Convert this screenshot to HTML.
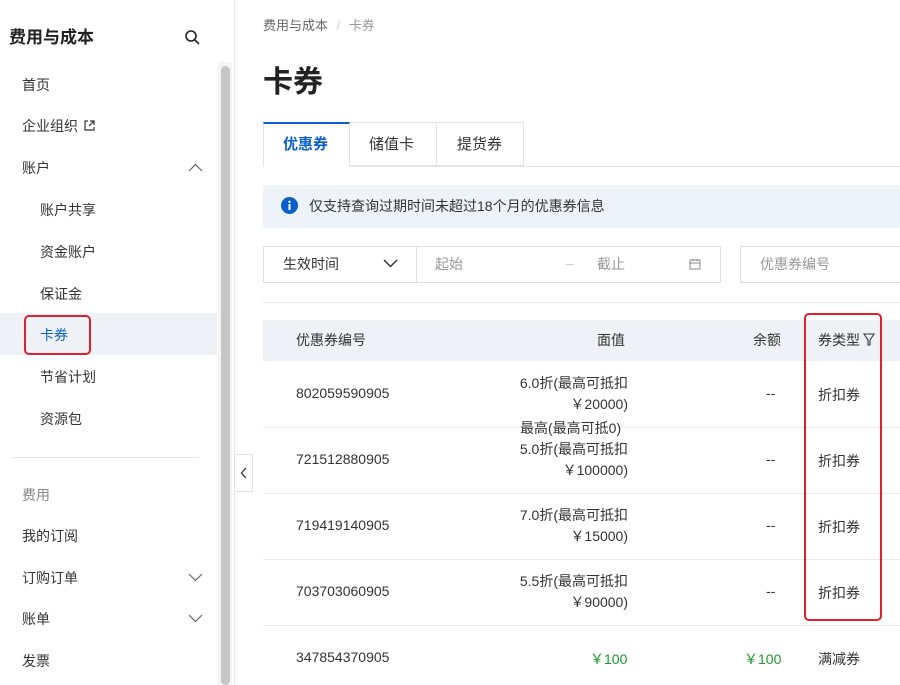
<!DOCTYPE html><html><head><meta charset="utf-8"><style>
*{box-sizing:border-box;margin:0;padding:0}
body{width:900px;height:685px;overflow:hidden;background:#fff;font-family:"Liberation Sans","Noto Sans CJK SC",sans-serif;color:#333;position:relative;font-size:14px}
.a{position:absolute;white-space:nowrap}
.nav{font-size:14px;color:#333}
.gray{color:#888}
.r{text-align:right}
</style></head><body>
<!-- sidebar -->
<div class="a" style="left:9px;top:23px;font-size:17px;font-weight:bold;color:#222">费用与成本</div>
<svg class="a" style="left:184px;top:29px" width="16" height="16" viewBox="0 0 16 16"><circle cx="7" cy="7" r="5" fill="none" stroke="#222" stroke-width="1.6"/><path d="M11 11l4 4" stroke="#222" stroke-width="1.6"/></svg>
<div class="a" style="left:0;top:313px;width:217px;height:42px;background:#eef2f7"></div>
<div class="a nav" style="left:22px;top:75px">首页</div>
<div class="a nav" style="left:22px;top:116px">企业组织</div>
<svg class="a" style="left:84px;top:120px" width="11" height="11" viewBox="0 0 11 11"><path d="M4 1H1v9h9V7M6 1h4v4M10 1L5 6" fill="none" stroke="#333" stroke-width="1.2"/></svg>
<div class="a nav" style="left:22px;top:158px">账户</div>
<svg class="a" style="left:188px;top:163px" width="15" height="9" viewBox="0 0 15 9"><path d="M1 8l6.5-6.5L14 8" fill="none" stroke="#666" stroke-width="1.2"/></svg>
<div class="a nav" style="left:40px;top:200px">账户共享</div>
<div class="a nav" style="left:40px;top:242px">资金账户</div>
<div class="a nav" style="left:40px;top:284px">保证金</div>
<div class="a nav" style="left:40px;top:325px;color:#0a5fc9">卡券</div>
<div class="a" style="left:24px;top:315px;width:67px;height:40px;border:2px solid #e0202a;border-radius:5px"></div>
<div class="a nav" style="left:40px;top:367px">节省计划</div>
<div class="a nav" style="left:40px;top:409px">资源包</div>
<div class="a" style="left:12px;top:457px;width:186px;height:1px;background:#e5e5e5"></div>
<div class="a nav gray" style="left:22px;top:485px">费用</div>
<div class="a nav" style="left:22px;top:526px">我的订阅</div>
<div class="a nav" style="left:22px;top:568px">订购订单</div>
<svg class="a" style="left:188px;top:573px" width="15" height="9" viewBox="0 0 15 9"><path d="M1 1l6.5 6.5L14 1" fill="none" stroke="#666" stroke-width="1.2"/></svg>
<div class="a nav" style="left:22px;top:609px">账单</div>
<svg class="a" style="left:188px;top:614px" width="15" height="9" viewBox="0 0 15 9"><path d="M1 1l6.5 6.5L14 1" fill="none" stroke="#666" stroke-width="1.2"/></svg>
<div class="a nav" style="left:22px;top:651px">发票</div>
<div class="a" style="left:218px;top:62px;width:14px;height:623px;background:#f4f4f4"></div>
<div class="a" style="left:221px;top:66px;width:9px;height:619px;background:#c6c6c6;border-radius:5px"></div>
<div class="a" style="left:234px;top:0;width:1px;height:685px;background:#e6e6e6"></div>
<div class="a" style="left:234px;top:454px;width:19px;height:38px;background:#fff;border:1px solid #e3e3e3"></div>
<svg class="a" style="left:240px;top:467px" width="8" height="12" viewBox="0 0 8 12"><path d="M6 1L1.5 6 6 11" fill="none" stroke="#333" stroke-width="1.3"/></svg>
<!-- main -->
<div class="a" style="left:263px;top:15px;font-size:13px;color:#666">费用与成本 <span style="color:#ccc;margin:0 5px">/</span> <span style="color:#999">卡券</span></div>
<div class="a" style="left:263px;top:57px;font-size:30px;font-weight:bold;color:#222">卡券</div>
<div class="a" style="left:263px;top:166px;width:637px;height:1px;background:#e3e3e3"></div>
<div class="a" style="left:263px;top:122px;width:87px;height:45px;background:#fff;border:1px solid #e3e3e3;border-top:2px solid #0a5fc9;border-bottom:none"></div>
<div class="a" style="left:350px;top:122px;width:87px;height:44px;border:1px solid #e3e3e3;border-left:none"></div>
<div class="a" style="left:437px;top:122px;width:87px;height:44px;border:1px solid #e3e3e3;border-left:none"></div>
<div class="a" style="left:283px;top:133px;font-size:15px;color:#0a5fc9;font-weight:bold">优惠券</div>
<div class="a" style="left:369px;top:133px;font-size:15px">储值卡</div>
<div class="a" style="left:457px;top:133px;font-size:15px">提货券</div>
<div class="a" style="left:263px;top:185px;width:637px;height:43px;background:#eef3f9"></div>
<svg class="a" style="left:281px;top:197px" width="17" height="17" viewBox="0 0 17 17"><circle cx="8.5" cy="8.5" r="8.5" fill="#0a5fc9"/><rect x="7.5" y="7" width="2" height="6" fill="#fff"/><circle cx="8.5" cy="4.8" r="1.2" fill="#fff"/></svg>
<div class="a" style="left:309px;top:196px;font-size:14px;color:#333">仅支持查询过期时间未超过18个月的优惠券信息</div>
<div class="a" style="left:263px;top:246px;width:458px;height:37px;border:1px solid #e0e0e0"></div>
<div class="a" style="left:416px;top:246px;width:1px;height:37px;background:#e0e0e0"></div>
<div class="a" style="left:283px;top:254px;font-size:14px">生效时间</div>
<svg class="a" style="left:383px;top:259px" width="15" height="9" viewBox="0 0 15 9"><path d="M1 1l6.5 6.5L14 1" fill="none" stroke="#333" stroke-width="1.5"/></svg>
<div class="a gray" style="left:435px;top:254px;font-size:14px;color:#999">起始</div>
<div class="a" style="left:566px;top:264px;width:8px;height:1px;background:#ccc"></div>
<div class="a" style="left:597px;top:254px;font-size:14px;color:#999">截止</div>
<svg class="a" style="left:689px;top:258px" width="12" height="12" viewBox="0 0 12 12"><rect x="1" y="2" width="10" height="9" fill="none" stroke="#888"/><path d="M1 5h10M4 1v2M8 1v2" stroke="#888"/></svg>
<div class="a" style="left:740px;top:246px;width:170px;height:37px;border:1px solid #e0e0e0"></div>
<div class="a" style="left:760px;top:254px;font-size:14px;color:#999">优惠券编号</div>
<div class="a" style="left:263px;top:302px;width:637px;height:1px;background:#e6e6e6"></div>
<div class="a" style="left:263px;top:320px;width:637px;height:41px;background:#eef2f6"></div>
<div class="a" style="left:296px;top:330px">优惠券编号</div>
<div class="a" style="left:597px;top:330px">面值</div>
<div class="a" style="left:753px;top:330px">余额</div>
<div class="a" style="left:818px;top:330px">券类型</div>
<svg class="a" style="left:863px;top:333px" width="12" height="14" viewBox="0 0 12 14"><path d="M1 1h10L7 7v5H5V7z" fill="none" stroke="#333" stroke-width="1.1"/></svg>
<div class="a" style="left:263px;top:427px;width:637px;height:1px;background:#e8e8e8"></div>
<div class="a" style="left:263px;top:493px;width:637px;height:1px;background:#e8e8e8"></div>
<div class="a" style="left:263px;top:559px;width:637px;height:1px;background:#e8e8e8"></div>
<div class="a" style="left:263px;top:625px;width:637px;height:1px;background:#e8e8e8"></div>
<div class="a" style="left:296px;top:385px">802059590905</div>
<div class="a r" style="left:480px;width:148px;top:373px;line-height:21px">6.0折(最高可抵扣<br>￥20000)</div>
<div class="a" style="left:520px;top:418px;background:#fff">最高(最高可抵0)</div>
<div class="a" style="left:766px;top:385px">--</div>
<div class="a" style="left:818px;top:385px">折扣券</div>
<div class="a" style="left:296px;top:451px">721512880905</div>
<div class="a r" style="left:480px;width:148px;top:439px;line-height:21px">5.0折(最高可抵扣<br>￥100000)</div>
<div class="a" style="left:766px;top:451px">--</div>
<div class="a" style="left:818px;top:451px">折扣券</div>
<div class="a" style="left:296px;top:517px">719419140905</div>
<div class="a r" style="left:480px;width:148px;top:505px;line-height:21px">7.0折(最高可抵扣<br>￥15000)</div>
<div class="a" style="left:766px;top:517px">--</div>
<div class="a" style="left:818px;top:517px">折扣券</div>
<div class="a" style="left:296px;top:583px">703703060905</div>
<div class="a r" style="left:480px;width:148px;top:571px;line-height:21px">5.5折(最高可抵扣<br>￥90000)</div>
<div class="a" style="left:766px;top:583px">--</div>
<div class="a" style="left:818px;top:583px">折扣券</div>
<div class="a" style="left:296px;top:649px">347854370905</div>
<div class="a" style="left:590px;top:649px;color:#1a9a2a">￥100</div>
<div class="a" style="left:744px;top:649px;color:#1a9a2a">￥100</div>
<div class="a" style="left:818px;top:649px">满减券</div>
<div class="a" style="left:804px;top:313px;width:78px;height:308px;border:2px solid #e0202a;border-radius:5px"></div>
</body></html>
